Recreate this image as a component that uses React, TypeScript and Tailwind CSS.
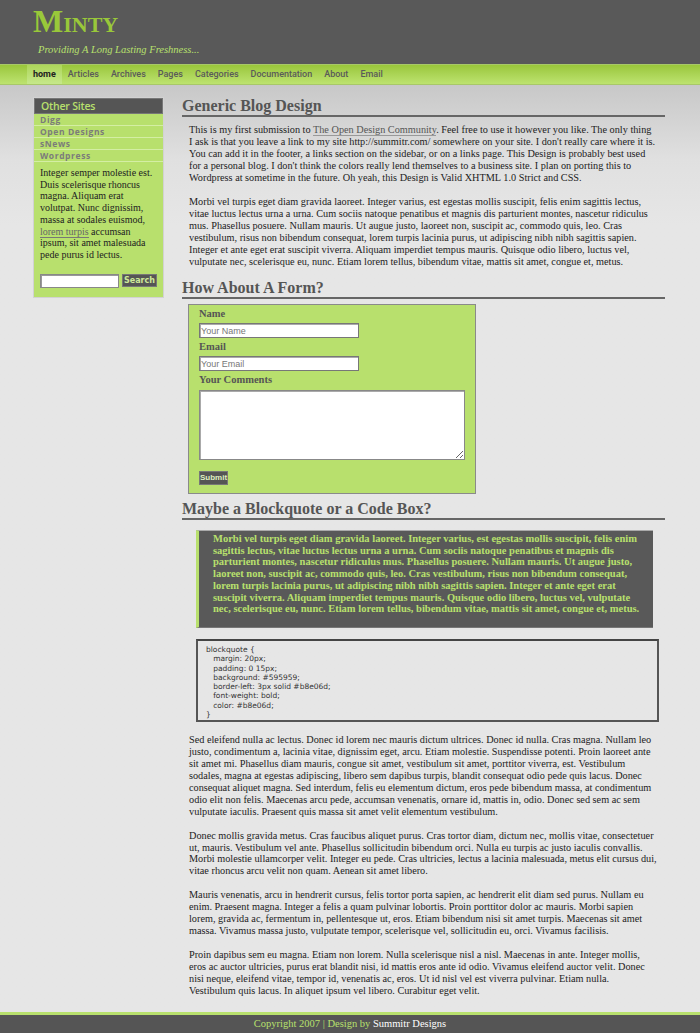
import React from "react";

const navItems = ["home", "Articles", "Archives", "Pages", "Categories", "Documentation", "About", "Email"];
const sideLinks = ["Digg", "Open Designs", "sNews", "Wordpress"];

const morbi =
  "Morbi vel turpis eget diam gravida laoreet. Integer varius, est egestas mollis suscipit, felis enim sagittis lectus, vitae luctus lectus urna a urna. Cum sociis natoque penatibus et magnis dis parturient montes, nascetur ridiculus mus. Phasellus posuere. Nullam mauris. Ut augue justo, laoreet non, suscipit ac, commodo quis, leo. Cras vestibulum, risus non bibendum consequat, lorem turpis lacinia purus, ut adipiscing nibh nibh sagittis sapien. Integer et ante eget erat suscipit viverra. Aliquam imperdiet tempus mauris. Quisque odio libero, luctus vel, vulputate nec, scelerisque eu, nunc. Etiam lorem tellus, bibendum vitae, mattis sit amet, congue et, metus.";

// widths nudged per paragraph so the lines break where the original's do
const tailParas = [
  {
    w: "w-[471px]",
    text: "Sed eleifend nulla ac lectus. Donec id lorem nec mauris dictum ultrices. Donec id nulla. Cras magna. Nullam leo justo, condimentum a, lacinia vitae, dignissim eget, arcu. Etiam molestie. Suspendisse potenti. Proin laoreet ante sit amet mi. Phasellus diam mauris, congue sit amet, vestibulum sit amet, porttitor viverra, est. Vestibulum sodales, magna at egestas adipiscing, libero sem dapibus turpis, blandit consequat odio pede quis lacus. Donec consequat aliquet magna. Sed interdum, felis eu elementum dictum, eros pede bibendum massa, at condimentum odio elit non felis. Maecenas arcu pede, accumsan venenatis, ornare id, mattis in, odio. Donec sed sem ac sem vulputate iaculis. Praesent quis massa sit amet velit elementum vestibulum.",
  },
  {
    w: "w-[471px]",
    text: "Donec mollis gravida metus. Cras faucibus aliquet purus. Cras tortor diam, dictum nec, mollis vitae, consectetuer ut, mauris. Vestibulum vel ante. Phasellus sollicitudin bibendum orci. Nulla eu turpis ac justo iaculis convallis. Morbi molestie ullamcorper velit. Integer eu pede. Cras ultricies, lectus a lacinia malesuada, metus elit cursus dui, vitae rhoncus arcu velit non quam. Aenean sit amet libero.",
  },
  {
    w: "w-[471px]",
    text: "Mauris venenatis, arcu in hendrerit cursus, felis tortor porta sapien, ac hendrerit elit diam sed purus. Nullam eu enim. Praesent magna. Integer a felis a quam pulvinar lobortis. Proin porttitor dolor ac mauris. Morbi sapien lorem, gravida ac, fermentum in, pellentesque ut, eros. Etiam bibendum nisi sit amet turpis. Maecenas sit amet massa. Vivamus massa justo, vulputate tempor, scelerisque vel, sollicitudin eu, orci. Vivamus facilisis.",
  },
  {
    w: "w-[466px]",
    text: "Proin dapibus sem eu magna. Etiam non lorem. Nulla scelerisque nisl a nisl. Maecenas in ante. Integer mollis, eros ac auctor ultricies, purus erat blandit nisi, id mattis eros ante id odio. Vivamus eleifend auctor velit. Donec nisi neque, eleifend vitae, tempor id, venenatis ac, eros. Ut id nisl vel est viverra pulvinar. Etiam nulla. Vestibulum quis lacus. In aliquet ipsum vel libero. Curabitur eget velit.",
  },
];

const codeLines = [
  "blockquote {",
  "   margin: 20px;",
  "   padding: 0 15px;",
  "   background: #595959;",
  "   border-left: 3px solid #b8e06d;",
  "   font-weight: bold;",
  "   color: #b8e06d;",
  "}",
];

function Heading({ children }: { children: React.ReactNode }) {
  return (
    <h2 className="text-[16px] font-bold leading-[19px] text-[#555] border-b-2 border-[#666] w-[483px]">
      {children}
    </h2>
  );
}

export default function App() {
  return (
    <div className="min-h-screen flex flex-col bg-[#e6e6e6] font-['Liberation_Serif',serif] text-[#222]">
      {/* Header */}
      <header className="h-[64px] bg-[#595959] pl-[33px] pt-[4px]">
        <h1 className="text-[32px] leading-[35px] font-bold text-[#99c83a] [font-variant:small-caps]">
          Minty
        </h1>
        <p className="pl-[5px] mt-[5px] text-[10.5px] italic text-[#b8e06d] leading-[12px]">
          Providing A Long Lasting Freshness...
        </p>
      </header>

      {/* Nav */}
      <nav className="h-[21px] border-t border-[#5d5a6a] bg-gradient-to-b from-[#9ac63a] to-[#bde36f] border-b border-[#a8c868] pl-[27px] flex font-['Roboto',sans-serif] text-[9px] font-medium">
        {navItems.map((item, i) => (
          <span
            key={item}
            className={
              i === 0
                ? "px-[6px] flex items-center bg-gradient-to-b from-[#aed65a] to-[#c6e88a] text-[#222] font-bold"
                : "px-[6px] flex items-center text-[#5a5a5a]"
            }
          >
            {item}
          </span>
        ))}
      </nav>

      {/* Body */}
      <div className="flex-1 bg-gradient-to-b from-[#c8c8c8] via-[#e0e0e0] via-[8%] to-[#e6e6e6] to-[15%] flex pl-[33px] pt-[11px] pb-[12px]">
        {/* Sidebar */}
        <aside className="w-[131px] self-start bg-[#b8e06d] border border-[#d2d2d2] mt-[1px]">
          <div className="h-[16px] bg-[#555] border border-[#777] pl-[6px] text-[10.5px] leading-[14px] font-semibold text-[#b8e06d] font-['Open_Sans',sans-serif] tracking-[-0.2px]">
            Other Sites
          </div>
          {sideLinks.map((l) => (
            <div
              key={l}
              className="h-[12px] border-b border-[#d4eea4] pl-[6px] text-[8.5px] leading-[11px] font-bold tracking-[0.6px] text-[#7b7b7b] font-['Open_Sans',sans-serif]"
            >
              {l}
            </div>
          ))}
          <p className="px-[6px] pt-[5px] text-[10px] leading-[11.7px] text-[#222]">
            Integer semper molestie est. Duis scelerisque rhoncus magna. Aliquam erat volutpat. Nunc dignissim, massa at sodales euismod,{" "}
            <span className="text-[#666] border-b border-[#777]">lorem turpis</span> accumsan ipsum, sit amet malesuada pede purus id lectus.
          </p>
          <div className="flex items-center pl-[6px] mt-[13px] mb-[9px] gap-[3px]">
            <input className="w-[79px] h-[14px] bg-white border border-[#888] shadow-[inset_1px_1px_0_#999]" />
            <button className="h-[13px] w-[35px] bg-[#555] border border-[#777] text-[8px] leading-[11px] font-bold text-[#cde89a] font-['DejaVu_Sans',sans-serif]">
              Search
            </button>
          </div>
        </aside>

        {/* Main */}
        <main className="ml-[18px] w-[490px]">
          <Heading>Generic Blog Design</Heading>
          <div className="pl-[7px] w-[474px] text-[10.25px] leading-[12px] mt-[7px]">
            <p>
              This is my first submission to{" "}
              <span className="text-[#555] border-b border-[#999]">The Open Design Community</span>. Feel free to use it however you like. The only thing I ask is that you leave a link to my site http://summitr.com/ somewhere on your site. I don't really care where it is. You can add it in the footer, a links section on the sidebar, or on a links page. This Design is probably best used for a personal blog. I don't think the colors really lend themselves to a business site. I plan on porting this to Wordpress at sometime in the future. Oh yeah, this Design is Valid XHTML 1.0 Strict and CSS.
            </p>
            <p className="mt-[12px]">{morbi}</p>
          </div>

          <div className="mt-[10px]">
            <Heading>How About A Form?</Heading>
          </div>
          <form className="ml-[6px] mt-[5px] w-[288px] h-[190px] bg-[#b8e06d] border border-[#8a8a8a] pl-[10px] pt-[3px] text-[10.5px] font-bold text-[#555]">
            <div className="leading-[12px]">Name</div>
            <input
              placeholder="Your Name"
              className="mt-[3px] block w-[160px] h-[15px] bg-white border border-[#777] shadow-[inset_1px_1px_0_#aaa] px-[1px] text-[9px] font-normal font-['Liberation_Sans',sans-serif] placeholder:text-[#777]"
            />
            <div className="leading-[12px] mt-[3px]">Email</div>
            <input
              placeholder="Your Email"
              className="mt-[3px] block w-[160px] h-[15px] bg-white border border-[#777] shadow-[inset_1px_1px_0_#aaa] px-[1px] text-[9px] font-normal font-['Liberation_Sans',sans-serif] placeholder:text-[#777]"
            />
            <div className="leading-[12px] mt-[3px]">Your Comments</div>
            <textarea className="mt-[4px] block w-[266px] h-[70px] bg-white border border-[#888] shadow-[inset_1px_1px_0_#aaa]" />
            <button
              type="button"
              className="mt-[11px] block w-[29px] h-[14px] bg-[#555] border border-[#777] text-[8px] leading-[12px] font-bold text-[#dff0c0] font-['Liberation_Sans',sans-serif]"
            >
              Submit
            </button>
          </form>

          <div className="mt-[5px]">
            <Heading>Maybe a Blockquote or a Code Box?</Heading>
          </div>
          <blockquote className="ml-[14px] mt-[10px] w-[457px] bg-[#595959] border-l-[3px] border-[#b8e06d] border-t border-t-[#aaa] border-b border-b-[#777] pl-[14px] pr-[10px] pt-[2px] pb-[12px] text-[10.5px] leading-[11.7px] font-bold text-[#b8e06d]">
            {morbi}
          </blockquote>
          <pre className="ml-[14px] mt-[11px] w-[463px] border-2 border-[#555] border-t-[#444] pl-[8px] pt-[4px] pb-[1px] text-[7.5px] leading-[9.3px] text-[#333] font-['DejaVu_Sans',sans-serif]">
            {codeLines.join("\n")}
          </pre>

          <div className="pl-[7px] text-[10.25px] leading-[11.9px] mt-[12px] flex flex-col gap-[12px]">
            {tailParas.map((p, i) => (
              <p key={i} className={p.w}>
                {p.text}
              </p>
            ))}
          </div>
        </main>
      </div>

      {/* Footer */}
      <footer className="h-[21px] border-t-[3px] border-[#b8e06d] bg-[#555] text-center text-[10.5px] leading-[18px] text-[#b8e06d]">
        Copyright 2007 | Design by <span className="text-white">Summitr Designs</span>
      </footer>
    </div>
  );
}
